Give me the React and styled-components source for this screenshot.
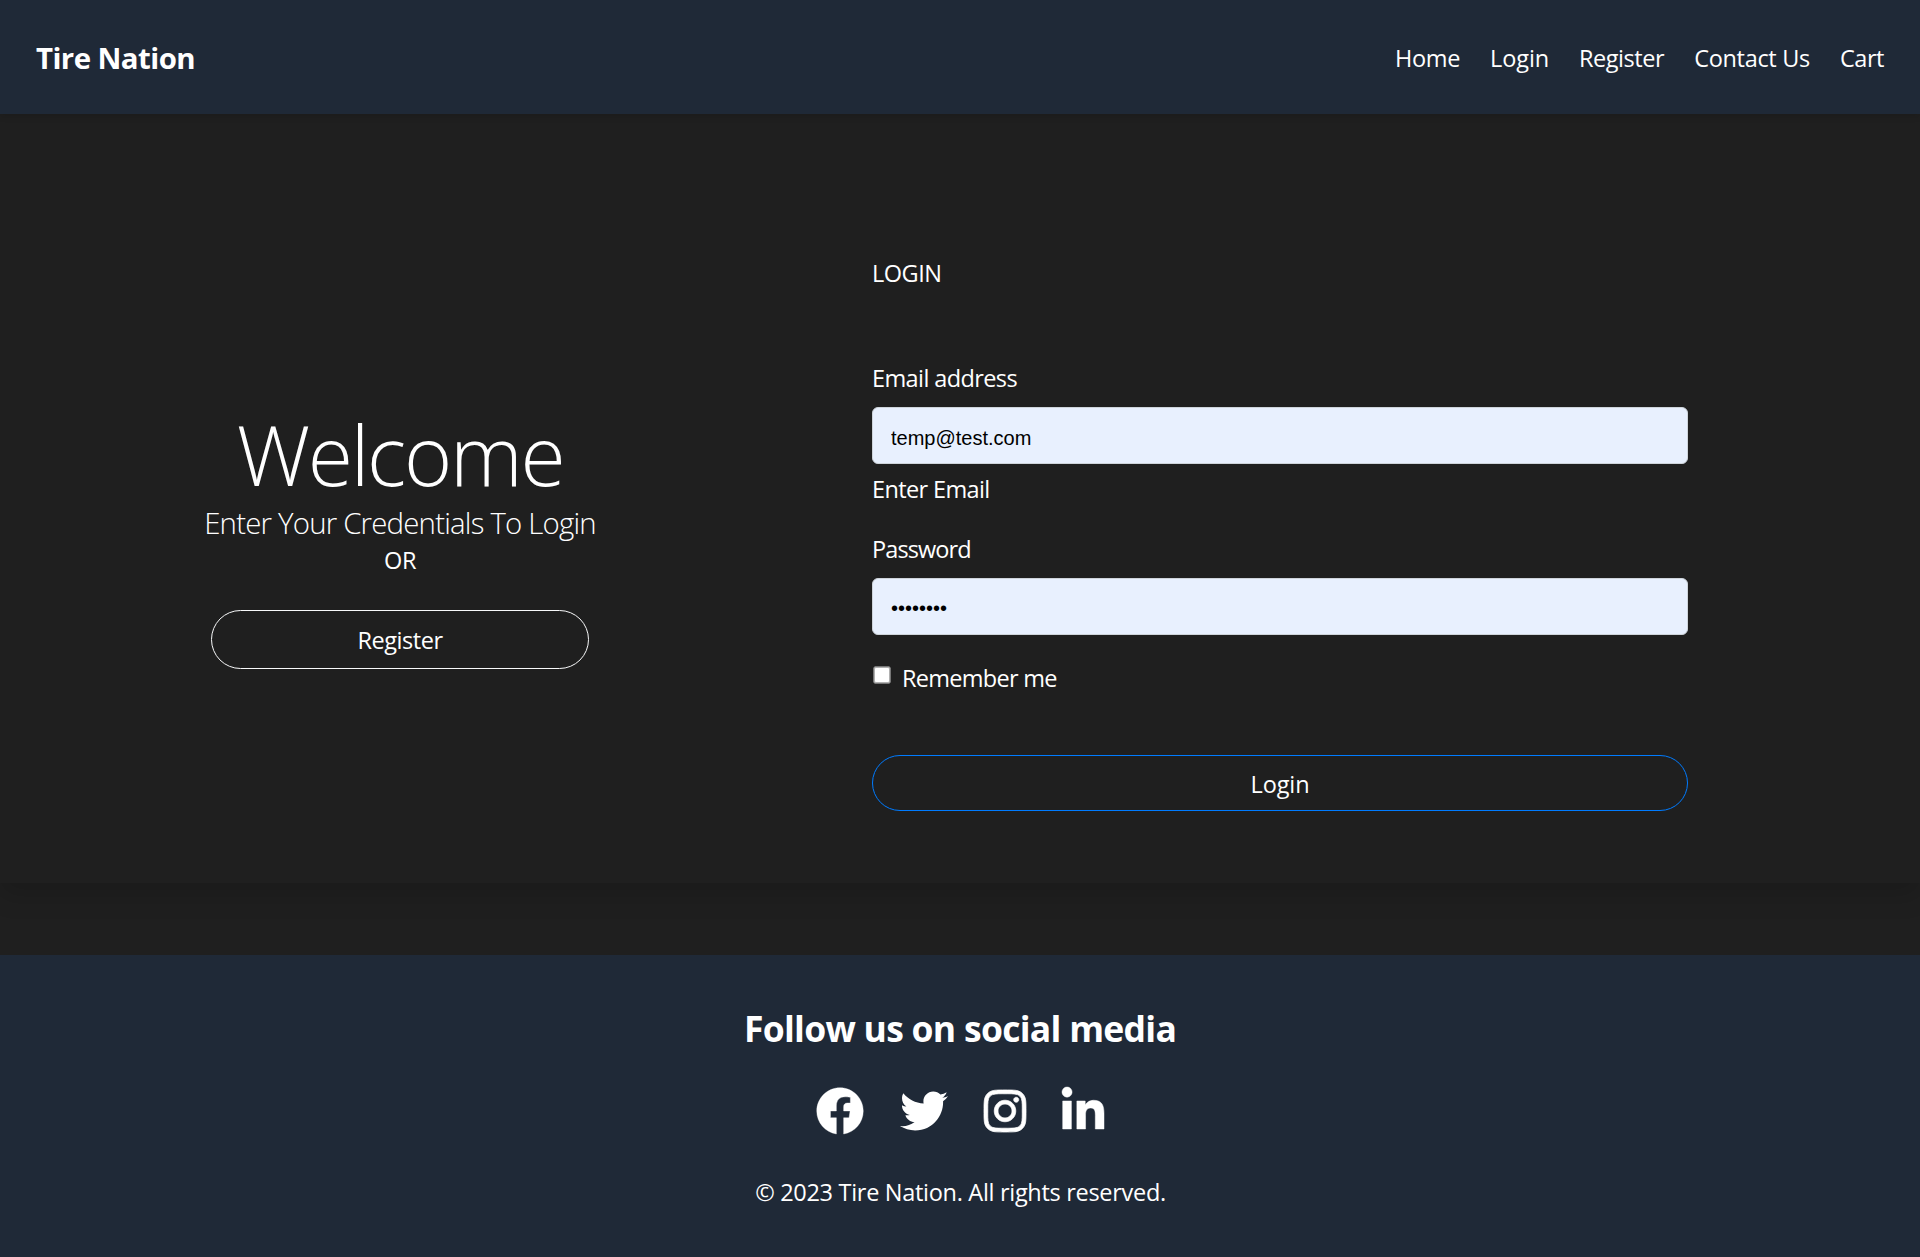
import React from 'react';
import styled, { createGlobalStyle } from 'styled-components';
import { FaFacebook, FaTwitter, FaInstagram, FaLinkedinIn } from 'react-icons/fa';

const Global = createGlobalStyle`
  *, *::before, *::after { box-sizing: border-box; }
  body {
    margin: 0;
    background: #1f1f1f;
    color: #fff;
    font-family: "Open Sans", "Noto Sans", sans-serif;
    font-size: 23.5px;
    line-height: 36px;
  }
`;

const Page = styled.div`
  display: flex;
  flex-direction: column;
  min-height: 1257px;
`;

const Navbar = styled.nav`
  display: flex;
  align-items: center;
  justify-content: space-between;
  height: 114px;
  padding: 1px 36px 0;
  background: #1f2937;
  position: relative;
  box-shadow: 0 3px 6px rgba(0, 0, 0, 0.1);
`;

const Brand = styled.a`
  color: #fff;
  font-size: 29.4px;
  font-weight: 700;
  letter-spacing: -0.56px;
`;

const NavList = styled.ul`
  display: flex;
  gap: 30px;
  margin: 0;
  padding: 0;
  list-style: none;
`;

const NavLink = styled.a`
  display: block;
  color: #fff;
  letter-spacing: ${(p) => p.$track}px;
`;

const Card = styled.main`
  display: flex;
  height: 769px;
  margin-bottom: 72px;
  box-shadow: 0 12px 24px rgba(0, 0, 0, 0.15);
`;

const Intro = styled.section`
  display: flex;
  flex-direction: column;
  align-items: center;
  width: 800px;
  padding-top: 289px;
`;

const Welcome = styled.h1`
  margin: 0;
  font-size: 82.3px;
  font-weight: 300;
  line-height: 102px;
  letter-spacing: -2.25px;
`;

const Lead = styled.p`
  margin: 0;
  font-size: 29.4px;
  font-weight: 300;
  line-height: 37px;
  letter-spacing: -0.8px;
`;

const Or = styled.p`
  margin: 0 0 32px;
  letter-spacing: -0.3px;
`;

const PillButton = styled.button`
  width: ${(p) => p.$width};
  height: ${(p) => p.$height}px;
  margin-top: ${(p) => p.$top || 0}px;
  padding: ${(p) => p.$nudge || 0}px 0 0;
  border: 1px solid ${(p) => p.$color};
  border-radius: 30px;
  background: transparent;
  color: #fff;
  font: inherit;
  letter-spacing: ${(p) => p.$track}px;
`;

const Form = styled.form`
  display: flex;
  flex-direction: column;
  width: 816px;
  margin-left: 72px;
  padding-top: 141px;
`;

const FormTitle = styled.p`
  margin: 0 0 69px;
  letter-spacing: -0.5px;
`;

const Field = styled.div`
  display: flex;
  flex-direction: column;
  margin-bottom: 24px;
`;

const Label = styled.label`
  letter-spacing: ${(p) => p.$track}px;
`;

const Input = styled.input`
  height: 57px;
  margin-top: 11px;
  padding: ${(p) => p.$nudge}px 18px 0;
  border: 1px solid #ced4da;
  border-radius: 6px;
  background: #e8f0fe;
  color: #000;
  font-family: "Liberation Sans", Arial, sans-serif;
  font-size: 20px;
  outline: none;
`;

const Hint = styled.small`
  margin-top: 7px;
  font-size: inherit;
  letter-spacing: -0.62px;
`;

const CheckRow = styled.div`
  display: flex;
  align-items: flex-start;
  gap: 11px;
  margin-top: 1px;
`;

const Checkbox = styled.input`
  appearance: none;
  width: 18px;
  height: 18px;
  margin: 6px 0 0 1px;
  border: 1px solid #767676;
  border-radius: 3px;
  background: #fff;
  box-shadow: inset 0 0 0 1px #b0b0b0;
`;

const Footer = styled.footer`
  display: flex;
  flex-direction: column;
  align-items: center;
  height: 302px;
  padding-top: 46px;
  background: #1f2937;
`;

const FooterTitle = styled.h2`
  margin: 0;
  font-size: 35.5px;
  font-weight: 700;
  line-height: 54px;
  letter-spacing: -0.72px;
`;

const Social = styled.div`
  display: flex;
  gap: 36px;
  height: 48px;
  margin: 32px 0 39px;
`;

const SocialLink = styled.a`
  display: flex;
  width: ${(p) => p.$width}px;
  color: #fff;
  svg {
    width: 100%;
    height: 48px;
    overflow: visible;
    stroke-width: ${(p) => p.$stroke};
  }
`;

const Copyright = styled.p`
  margin: 0;
  padding-left: 1px;
  letter-spacing: -0.3px;
`;

const links = [
  ['Home', -0.34],
  ['Login', -0.1],
  ['Register', -0.46],
  ['Contact Us', -0.3],
  ['Cart', -0.46],
];

const socials = [
  ['Facebook', FaFacebook, 48, 4],
  ['Twitter', FaTwitter, 48, 0],
  ['Instagram', FaInstagram, 42, 8],
  ['LinkedIn', FaLinkedinIn, 42, 5],
];

export default function App() {
  return (
    <Page>
      <Global />
      <Navbar>
        <Brand>Tire Nation</Brand>
        <NavList>
          {links.map(([name, track]) => (
            <li key={name}>
              <NavLink $track={track}>{name}</NavLink>
            </li>
          ))}
        </NavList>
      </Navbar>
      <Card>
        <Intro>
          <Welcome>Welcome</Welcome>
          <Lead>Enter Your Credentials To Login</Lead>
          <Or>OR</Or>
          <PillButton $width="378px" $height={59} $color="#f8f9fa" $track={-0.46}>
            Register
          </PillButton>
        </Intro>
        <Form>
          <FormTitle>LOGIN</FormTitle>
          <Field>
            <Label $track={-0.6} htmlFor="email">Email address</Label>
            <Input id="email" type="email" defaultValue="temp@test.com" $nudge={6} />
            <Hint>Enter Email</Hint>
          </Field>
          <Field>
            <Label $track={-0.9} htmlFor="password">Password</Label>
            <Input id="password" type="password" defaultValue="password" $nudge={4} />
          </Field>
          <CheckRow>
            <Checkbox id="remember" type="checkbox" />
            <Label $track={-0.72} htmlFor="remember">Remember me</Label>
          </CheckRow>
          <PillButton type="button" $width="100%" $height={56} $top={59} $nudge={2} $color="#007bff" $track={-0.1}>
            Login
          </PillButton>
        </Form>
      </Card>
      <Footer>
        <FooterTitle>Follow us on social media</FooterTitle>
        <Social>
          {socials.map(([name, Icon, width, stroke]) => (
            <SocialLink key={name} aria-label={name} $width={width} $stroke={stroke}>
              <Icon />
            </SocialLink>
          ))}
        </Social>
        <Copyright>© 2023 Tire Nation. All rights reserved.</Copyright>
      </Footer>
    </Page>
  );
}
